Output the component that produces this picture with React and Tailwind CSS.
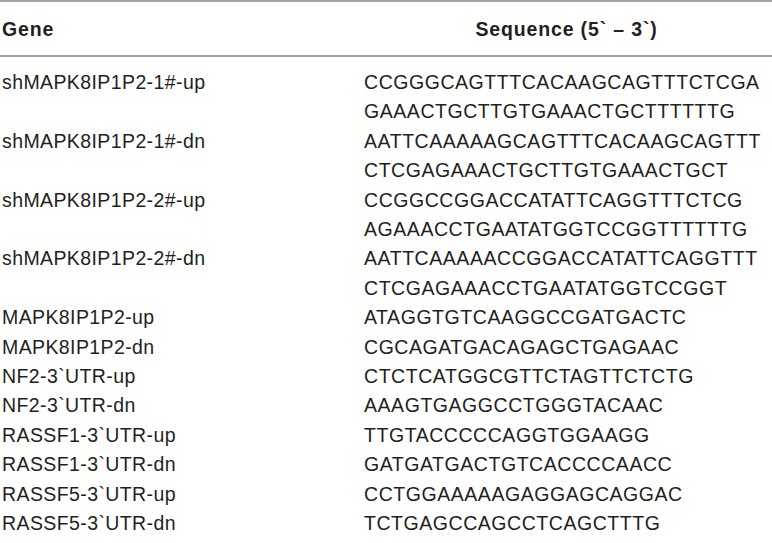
import React from "react";

const rows = [
  ["shMAPK8IP1P2-1#-up", ["CCGGGCAGTTTCACAAGCAGTTTCTCGA", "GAAACTGCTTGTGAAACTGCTTTTTTG"]],
  ["shMAPK8IP1P2-1#-dn", ["AATTCAAAAAGCAGTTTCACAAGCAGTTT", "CTCGAGAAACTGCTTGTGAAACTGCT"]],
  ["shMAPK8IP1P2-2#-up", ["CCGGCCGGACCATATTCAGGTTTCTCG", "AGAAACCTGAATATGGTCCGGTTTTTTG"]],
  ["shMAPK8IP1P2-2#-dn", ["AATTCAAAAACCGGACCATATTCAGGTTT", "CTCGAGAAACCTGAATATGGTCCGGT"]],
  ["MAPK8IP1P2-up", ["ATAGGTGTCAAGGCCGATGACTC"]],
  ["MAPK8IP1P2-dn", ["CGCAGATGACAGAGCTGAGAAC"]],
  ["NF2-3`UTR-up", ["CTCTCATGGCGTTCTAGTTCTCTG"]],
  ["NF2-3`UTR-dn", ["AAAGTGAGGCCTGGGTACAAC"]],
  ["RASSF1-3`UTR-up", ["TTGTACCCCCAGGTGGAAGG"]],
  ["RASSF1-3`UTR-dn", ["GATGATGACTGTCACCCCAACC"]],
  ["RASSF5-3`UTR-up", ["CCTGGAAAAAGAGGAGCAGGAC"]],
  ["RASSF5-3`UTR-dn", ["TCTGAGCCAGCCTCAGCTTTG"]],
];

export default function App() {
  return (
    <div
      className="w-[772px] h-[543px] bg-white overflow-hidden text-[#231f20]"
      style={{ fontFamily: '"Liberation Sans", Arial, sans-serif' }}
    >
      <div className="border-t-2 border-[#a3a3a3]" />
      <div className="grid grid-cols-[364px_1fr] h-[53px] pt-[17.2px] font-bold text-[19.5px] leading-[20px] tracking-[0.85px]">
        <div className="pl-[2px]">Gene</div>
        <div className="text-center pr-[3px]">Sequence (5` – 3`)</div>
      </div>
      <div className="border-t-2 border-[#a3a3a3]" />
      <div className="pt-[11px] text-[19.5px] leading-[29.4px]">
        {rows.map(([gene, seqs]) => (
          <div key={gene} className="grid grid-cols-[364px_1fr]">
            <div className="pl-[2px] tracking-[0.4px]">{gene}</div>
            <div className="tracking-[0.55px]">
              {seqs.map((s) => (
                <div key={s}>{s}</div>
              ))}
            </div>
          </div>
        ))}
      </div>
    </div>
  );
}
